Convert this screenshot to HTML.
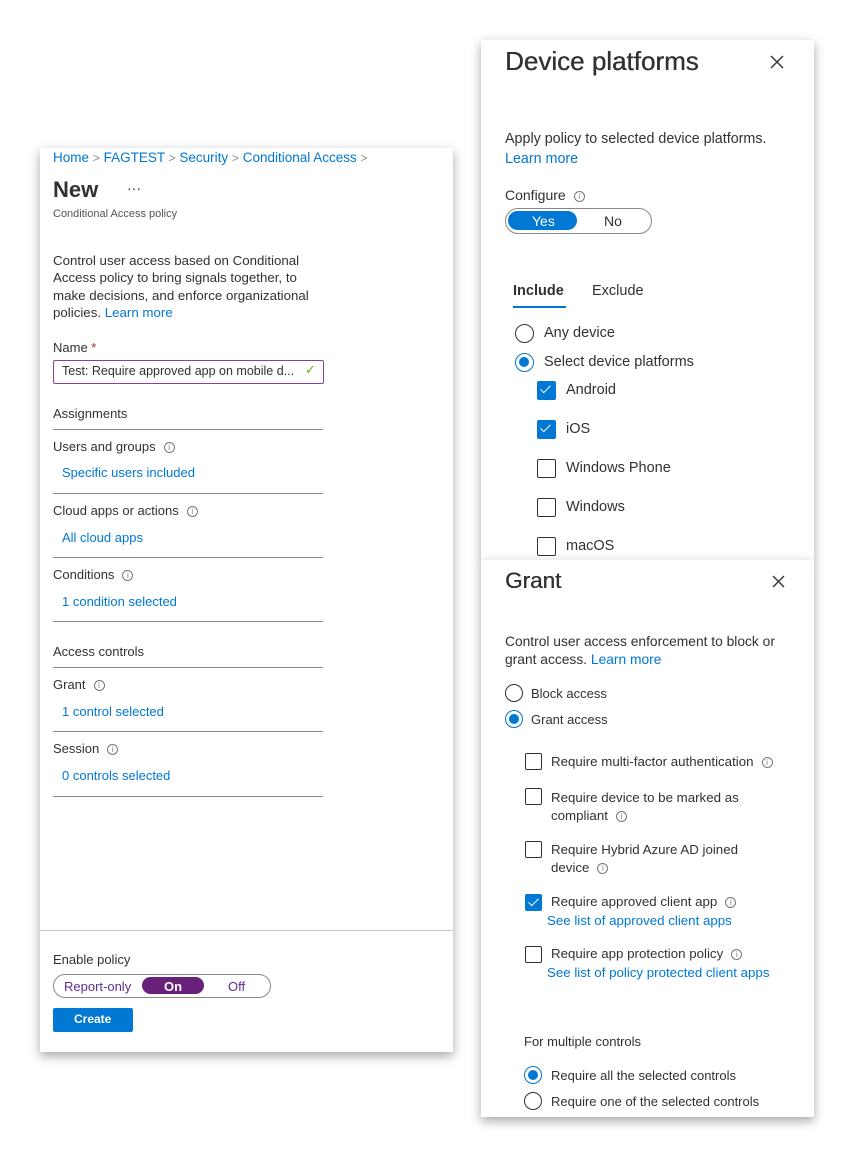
<!DOCTYPE html>
<html><head><meta charset="utf-8"><style>
body{margin:0;width:854px;height:1157px;background:#fff;position:relative;overflow:hidden;font-family:"Liberation Sans",sans-serif;color:#323130}
.p{position:absolute;background:#fff;box-shadow:0 4px 10px rgba(0,0,0,.35)}
.t{position:absolute;white-space:nowrap;font-size:13px}
.l{color:#0078d4}
.hr{position:absolute;height:1px;background:#8a8886}
.i{display:inline-block;width:9px;height:9px;border:1px solid #777;border-radius:50%;font-size:8px;line-height:9px;text-align:center;color:#777;margin-left:8px;vertical-align:1px}
.cb{position:absolute;width:17px;height:17px;border:1px solid #323130;border-radius:2px;box-sizing:border-box}
.cb.on{background:#0078d4;border-color:#0078d4}
.cb.on::after{content:"";position:absolute;left:5px;top:1px;width:4px;height:9px;border:solid #fff;border-width:0 1.5px 1.5px 0;transform:rotate(45deg)}
.rd{position:absolute;width:18px;height:18px;border:1px solid #323130;border-radius:50%;box-sizing:border-box}
.rd.on{border-color:#0078d4}
.rd.on::after{content:"";position:absolute;left:3px;top:3px;width:10px;height:10px;border-radius:50%;background:#0078d4}
.ch{color:#888;font-size:12px}
svg{position:absolute}
.h{text-shadow:0.4px 0 0 #323130}
</style></head><body>

<!-- left panel -->
<div class="p" style="left:40px;top:148px;width:413px;height:904px"></div>
<div class="t" style="left:53px;top:150px;font-size:13.5px"><span class="l">Home</span> <span class="ch">&gt;</span> <span class="l">FAGTEST</span> <span class="ch">&gt;</span> <span class="l">Security</span> <span class="ch">&gt;</span> <span class="l">Conditional Access</span> <span class="ch">&gt;</span></div>
<div class="t" style="left:53px;top:177px;font-size:22px;font-weight:bold">New</div>
<div class="t" style="left:127px;top:180px;font-size:14px">···</div>
<div class="t" style="left:53px;top:208px;font-size:11px;color:#555">Conditional Access policy</div>
<div class="t" style="left:53px;top:252px;line-height:17.3px;font-size:13.3px">Control user access based on Conditional<br>Access policy to bring signals together, to<br>make decisions, and enforce organizational<br>policies. <span class="l">Learn more</span></div>
<div class="t" style="left:53px;top:340px">Name <span style="color:#a4262c">*</span></div>
<div style="position:absolute;left:53px;top:360px;width:269px;height:22px;border:1px solid #8a3d9c;border-radius:2px"></div>
<div class="t" style="left:62px;top:364px;font-size:12.5px">Test: Require approved app on mobile d...</div>
<div class="t" style="left:305px;top:362px;color:#6bb700;font-size:13px">✓</div>
<div class="t" style="left:53px;top:406px">Assignments</div>
<div class="hr" style="left:53px;top:429px;width:270px"></div>
<div class="t" style="left:53px;top:439px">Users and groups<span class="i">i</span></div>
<div class="t l" style="left:62px;top:465px">Specific users included</div>
<div class="hr" style="left:53px;top:493px;width:270px"></div>
<div class="t" style="left:53px;top:503px">Cloud apps or actions<span class="i">i</span></div>
<div class="t l" style="left:62px;top:530px">All cloud apps</div>
<div class="hr" style="left:53px;top:557px;width:270px"></div>
<div class="t" style="left:53px;top:567px">Conditions<span class="i">i</span></div>
<div class="t l" style="left:62px;top:594px">1 condition selected</div>
<div class="hr" style="left:53px;top:621px;width:270px"></div>
<div class="t" style="left:53px;top:644px">Access controls</div>
<div class="hr" style="left:53px;top:667px;width:270px"></div>
<div class="t" style="left:53px;top:677px">Grant<span class="i">i</span></div>
<div class="t l" style="left:62px;top:704px">1 control selected</div>
<div class="hr" style="left:53px;top:731px;width:270px"></div>
<div class="t" style="left:53px;top:741px">Session<span class="i">i</span></div>
<div class="t l" style="left:62px;top:768px">0 controls selected</div>
<div class="hr" style="left:53px;top:796px;width:270px"></div>
<div class="hr" style="left:40px;top:930px;width:413px;background:#c8c6c4"></div>
<div class="t" style="left:53px;top:952px">Enable policy</div>
<div style="position:absolute;left:53px;top:974px;width:216px;height:22px;border:1px solid #8a8886;border-radius:12px"></div>
<div style="position:absolute;left:142px;top:977px;width:62px;height:17px;background:#68217a;border-radius:9px"></div>
<div class="t" style="left:64px;top:979px;color:#5c2d91">Report-only</div>
<div class="t" style="left:164px;top:979px;color:#fff;font-weight:bold">On</div>
<div class="t" style="left:228px;top:979px;color:#5c2d91">Off</div>
<div style="position:absolute;left:53px;top:1008px;width:80px;height:24px;background:#0078d4;border-radius:2px"></div>
<div class="t" style="left:74px;top:1012px;color:#fff;font-weight:bold;font-size:12px">Create</div>

<!-- device platforms panel -->
<div class="p" style="left:481px;top:40px;width:333px;height:520px"></div>
<div class="t h" style="left:505px;top:46px;font-size:26px">Device platforms</div>
<svg style="left:770px;top:55px" width="14" height="14"><path d="M1 1L13 13M13 1L1 13" stroke="#323130" stroke-width="1.4"/></svg>
<div class="t" style="left:505px;top:131px;font-size:14.3px">Apply policy to selected device platforms.</div>
<div class="t l" style="left:505px;top:151px;font-size:14.3px">Learn more</div>
<div class="t" style="left:505px;top:187px;font-size:14px">Configure<span class="i">i</span></div>
<div style="position:absolute;left:505px;top:208px;width:145px;height:24px;border:1px solid #8a8886;border-radius:13px"></div>
<div style="position:absolute;left:508px;top:211px;width:69px;height:19px;background:#0078d4;border-radius:10px"></div>
<div class="t" style="left:532px;top:213px;color:#fff;font-size:14px">Yes</div>
<div class="t" style="left:604px;top:213px;font-size:14px">No</div>
<div class="t" style="left:513px;top:283px;font-size:14.5px;font-weight:bold">Include</div>
<div class="t" style="left:592px;top:283px;font-size:14.5px">Exclude</div>
<div style="position:absolute;left:513px;top:306px;width:53px;height:2px;background:#0078d4"></div>
<div class="rd" style="left:515px;top:324px;width:19px;height:19px"></div>
<div class="t" style="left:544px;top:325px;font-size:14.5px">Any device</div>
<div class="rd on" style="left:515px;top:353px;width:19px;height:19px"></div>
<div class="t" style="left:544px;top:354px;font-size:14.5px">Select device platforms</div>
<div class="cb on" style="left:537px;top:381px;width:19px;height:19px"></div><div class="t" style="left:566px;top:382px;font-size:14.5px">Android</div>
<div class="cb on" style="left:537px;top:420px;width:19px;height:19px"></div><div class="t" style="left:566px;top:421px;font-size:14.5px">iOS</div>
<div class="cb" style="left:537px;top:459px;width:19px;height:19px"></div><div class="t" style="left:566px;top:460px;font-size:14.5px">Windows Phone</div>
<div class="cb" style="left:537px;top:498px;width:19px;height:19px"></div><div class="t" style="left:566px;top:499px;font-size:14.5px">Windows</div>
<div class="cb" style="left:537px;top:537px;width:19px;height:19px"></div><div class="t" style="left:566px;top:538px;font-size:14.5px">macOS</div>

<!-- grant panel -->
<div class="p" style="left:481px;top:560px;width:333px;height:557px"></div>
<div class="t h" style="left:505px;top:568px;font-size:22.5px">Grant</div>
<svg style="left:772px;top:575px" width="13" height="13"><path d="M1 1L12 12M12 1L1 12" stroke="#323130" stroke-width="1.4"/></svg>
<div class="t" style="left:505px;top:633px;line-height:18px;font-size:13.8px">Control user access enforcement to block or<br>grant access. <span class="l">Learn more</span></div>
<div class="rd" style="left:505px;top:684px"></div><div class="t" style="left:531px;top:686px">Block access</div>
<div class="rd on" style="left:505px;top:710px"></div><div class="t" style="left:531px;top:712px">Grant access</div>
<div class="cb" style="left:525px;top:753px"></div><div class="t" style="left:551px;top:754px;font-size:13.3px">Require multi-factor authentication<span class="i">i</span></div>
<div class="cb" style="left:525px;top:788px"></div><div class="t" style="left:551px;top:789px;line-height:18px;font-size:13.3px">Require device to be marked as<br>compliant<span class="i">i</span></div>
<div class="cb" style="left:525px;top:841px"></div><div class="t" style="left:551px;top:841px;line-height:18px;font-size:13.3px">Require Hybrid Azure AD joined<br>device<span class="i">i</span></div>
<div class="cb on" style="left:525px;top:894px"></div><div class="t" style="left:551px;top:894px;font-size:13.3px">Require approved client app<span class="i">i</span></div>
<div class="t l" style="left:547px;top:913px;font-size:13.3px">See list of approved client apps</div>
<div class="cb" style="left:525px;top:946px"></div><div class="t" style="left:551px;top:946px;font-size:13.3px">Require app protection policy<span class="i">i</span></div>
<div class="t l" style="left:547px;top:965px;font-size:13.3px">See list of policy protected client apps</div>
<div class="t" style="left:524px;top:1034px">For multiple controls</div>
<div class="rd on" style="left:524px;top:1066px"></div><div class="t" style="left:551px;top:1068px">Require all the selected controls</div>
<div class="rd" style="left:524px;top:1092px"></div><div class="t" style="left:551px;top:1094px">Require one of the selected controls</div>
</body></html>
